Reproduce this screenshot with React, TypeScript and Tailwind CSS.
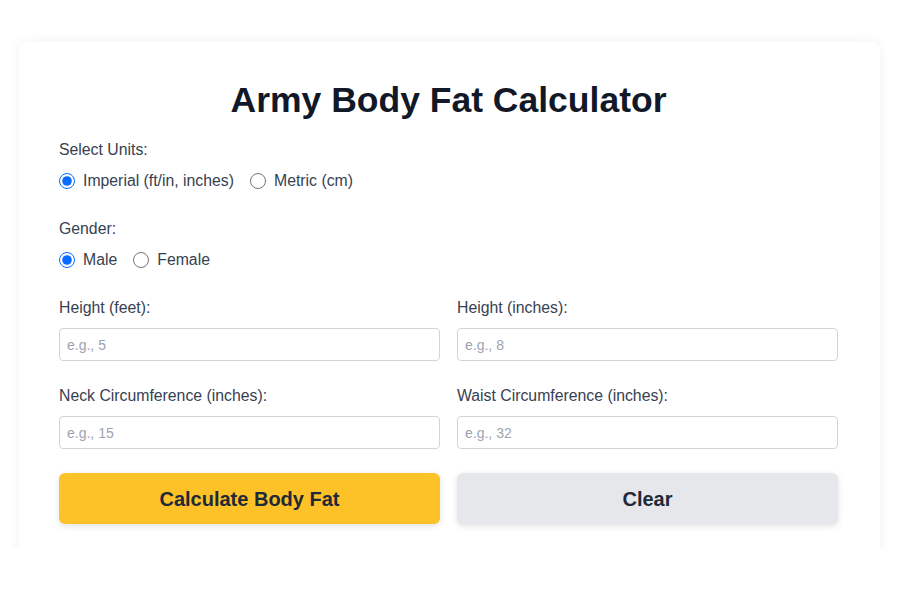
import React from "react";

function Radio({ checked, label, name }: { checked: boolean; label: string; name: string }) {
  return (
    <label className="flex items-center gap-2 mr-4">
      <input type="radio" name={name} defaultChecked={checked} className="w-4 h-4 m-0 accent-[#0a6cff]" />
      <span>{label}</span>
    </label>
  );
}

function Field({ label, ph }: { label: string; ph: string }) {
  return (
    <div className="flex flex-col">
      <label className="leading-6 mb-2">{label}</label>
      <input
        placeholder={ph}
        className="h-[33px] w-full border border-[#d1d5db] rounded-[4px] px-[7px] text-[14px] placeholder:text-[#9ca3af] outline-none"
      />
    </div>
  );
}

export default function App() {
  return (
    <div
      className="w-[900px] h-[600px] bg-white overflow-hidden text-[#374151] text-[15.8px]"
      style={{ fontFamily: '"Liberation Sans", Arial, sans-serif' }}
    >
      <div className="pt-[42px] px-[19px] h-[548px] overflow-hidden">
        <div className="w-[861px] h-[560px] bg-white rounded-lg shadow-[0_0_12px_rgba(0,0,0,0.06)] pl-10 pr-[42px] pt-[38px]">
          <h1 className="text-[35.5px] leading-10 font-bold text-[#111827] text-center mb-[18px]">
            Army Body Fat Calculator
          </h1>
          <div className="leading-6 mb-[7px]">Select Units:</div>
          <div className="flex items-center leading-6 mb-6">
            <Radio name="u" checked label="Imperial (ft/in, inches)" />
            <Radio name="u" checked={false} label="Metric (cm)" />
          </div>
          <div className="leading-6 mb-[7px]">Gender:</div>
          <div className="flex items-center leading-6 mb-6">
            <Radio name="g" checked label="Male" />
            <Radio name="g" checked={false} label="Female" />
          </div>
          <div className="grid grid-cols-2 gap-x-[17px] gap-y-[23px]">
            <Field label="Height (feet):" ph="e.g., 5" />
            <Field label="Height (inches):" ph="e.g., 8" />
            <Field label="Neck Circumference (inches):" ph="e.g., 15" />
            <Field label="Waist Circumference (inches):" ph="e.g., 32" />
          </div>
          <div className="grid grid-cols-2 gap-x-[17px] mt-[24px]">
            <button className="h-[51px] rounded-md bg-[#fcc227] text-[#1f2937] text-[20px] font-bold shadow-[0_2px_6px_rgba(0,0,0,0.12)]">
              Calculate Body Fat
            </button>
            <button className="h-[51px] rounded-md bg-[#e5e7eb] text-[#1f2937] text-[20px] font-bold shadow-[0_2px_6px_rgba(0,0,0,0.12)]">
              Clear
            </button>
          </div>
        </div>
      </div>
    </div>
  );
}
